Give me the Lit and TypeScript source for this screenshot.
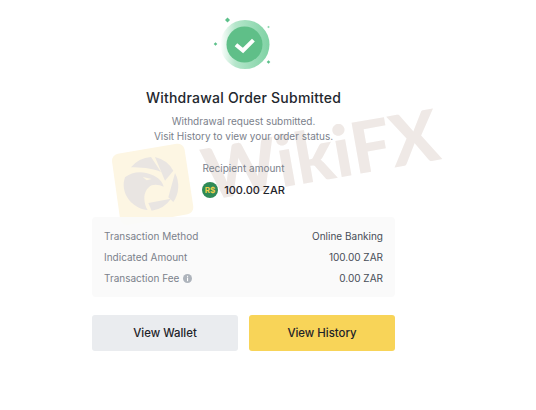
import { LitElement, html, css } from "lit";
import { customElement } from "lit/decorators.js";

@customElement("app-root")
export class AppRoot extends LitElement {
  static styles = css`
    :host { display: block; width: 536px; height: 410px; background: #fff; position: relative; overflow: hidden; font-family: Inter, "Liberation Sans", sans-serif; color: #1e2329; }
    .wm-logo { position: absolute; left: 105px; top: 138px; width: 95px; height: 95px; display: block; }
    .wm-text { position: absolute; left: 203px; top: 130px; font-family: "Lato", sans-serif; font-weight: 900; font-size: 71px; line-height: 88px; color: #efe9e6; transform: rotate(-10deg); transform-origin: left center; white-space: nowrap; }
    .page { position: relative; width: 303px; margin-left: 92px; display: flex; flex-direction: column; align-items: center; padding-top: 15px; }
    .hero { width: 56px; height: 56px; display: block; overflow: visible; }
    h1 { margin: 17px 0 0; font-size: 14px; line-height: 20px; font-weight: 500; letter-spacing: 0.22px; white-space: nowrap; color: #23272d; }
    .sub { margin-top: 6px; font-size: 10px; line-height: 15px; color: #7b818b; text-align: center; letter-spacing: -0.02px; }
    .label { margin-top: 17px; font-size: 10px; line-height: 15px; color: #7b818b; }
    .amount { margin-top: 6px; display: flex; align-items: center; gap: 6px; font-size: 11px; line-height: 16px; font-weight: 500; }
    .coin { width: 16px; height: 16px; display: block; }
    .panel { align-self: stretch; margin-top: 19px; height: 80px; box-sizing: border-box; padding: 9px 12px; background: rgba(250,250,250,0.93); border-radius: 4px; display: flex; flex-direction: column; justify-content: space-between; font-size: 10px; line-height: 21px; }
    .row { display: flex; justify-content: space-between; align-items: center; height: 21px; }
    .row .k { color: #7b818b; display: flex; align-items: center; gap: 4px; }
    .row .v { color: #474d57; }
    .info { width: 9px; height: 9px; display: block; }
    .btns { align-self: stretch; margin-top: 18px; display: grid; grid-template-columns: 1fr 1fr; gap: 11px; }
    .btn { height: 36px; border: 0; border-radius: 3px; font: 500 11.4px Inter, "Liberation Sans", sans-serif; color: #1e2329; padding: 0; }
    .sec { background: #eaecef; }
    .pri { background: #f8d458; }
  `;

  render() {
    return html`
      <svg class="wm-logo" viewBox="0 0 285 285">
        <path d="M42 68 L218 38 L244 208 L66 240 Z" fill="#fdf6e3" stroke="#fdf6e3" stroke-width="42" stroke-linejoin="round"/>
        <g fill="#e9e5e2">
          <path d="M78 88 A84 84 0 0 1 138 57 L168 102 C140 90 105 88 78 88 Z"/>
          <path d="M60 118 C80 100 115 98 140 110 C160 118 172 130 176 146 C165 140 150 138 140 142 C125 150 118 165 118 180 C118 195 122 208 128 216 C90 212 56 180 56 140 C56 132 58 125 60 118 Z"/>
          <path d="M150 57 A84 84 0 0 1 205 98 L180 128 Z"/>
          <path d="M210 105 A84 84 0 0 1 205 192 L190 178 Z"/>
          <path d="M130 195 L198 182 A84 84 0 0 1 140 218 Z"/>
        </g>
        <path d="M113 117 L140 123 L125 127 Z" fill="#fdf6e3"/>
      </svg>
      <div class="wm-text">WikiFX</div>
      <div class="page">
        <svg class="hero" viewBox="0 0 56 56">
          <defs>
            <linearGradient id="ring" x1="0" y1="0.5" x2="1" y2="0.5">
              <stop offset="0" stop-color="#fff"/>
              <stop offset="0.3" stop-color="#b5e6cb"/>
              <stop offset="1" stop-color="#7fd2a4"/>
            </linearGradient>
          </defs>
          <circle cx="29" cy="29.5" r="24.5" fill="url(#ring)"/>
          <circle cx="28.5" cy="29.5" r="18" fill="#5fbf88"/>
          <path d="M21.5 31 L27 35.5 L36 26.5" fill="none" stroke="#fff" stroke-width="4" stroke-linecap="square"/>
          <path d="M11.5 2.5 l2.5 2.5 l-2.5 2.5 l-2.5 -2.5Z" fill="#5cc08a"/>
          <path d="M-0.5 27.2 l1.8 1.8 l-1.8 1.8 l-1.8 -1.8Z" fill="#5cc08a"/>
          <path d="M52.5 10.7 l1.3 1.3 l-1.3 1.3 l-1.3 -1.3Z" fill="#8ed6ae"/>
          <path d="M52.5 45.2 l1.8 1.8 l-1.8 1.8 l-1.8 -1.8Z" fill="#5cc08a"/>
        </svg>
        <h1>Withdrawal Order Submitted</h1>
        <div class="sub">Withdrawal request submitted.<br />Visit History to view your order status.</div>
        <div class="label">Recipient amount</div>
        <div class="amount">
          <svg class="coin" viewBox="0 0 16 16">
            <circle cx="8" cy="8" r="8" fill="#2f8a57"/>
            <text x="8" y="10.8" text-anchor="middle" font-size="8" font-weight="700" fill="#f0d04a" font-family="Inter, sans-serif">R$</text>
          </svg>
          <span>100.00 ZAR</span>
        </div>
        <div class="panel">
          <div class="row"><span class="k">Transaction Method</span><span class="v">Online Banking</span></div>
          <div class="row"><span class="k">Indicated Amount</span><span class="v">100.00 ZAR</span></div>
          <div class="row">
            <span class="k">Transaction Fee
              <svg class="info" viewBox="0 0 9 9">
                <circle cx="4.5" cy="4.5" r="4.5" fill="#aeb4bc"/>
                <rect x="4" y="1.8" width="1.1" height="1.1" fill="#fff"/>
                <rect x="4" y="3.6" width="1.1" height="3.6" fill="#fff"/>
              </svg>
            </span>
            <span class="v">0.00 ZAR</span>
          </div>
        </div>
        <div class="btns">
          <button class="btn sec">View Wallet</button>
          <button class="btn pri">View History</button>
        </div>
      </div>
    `;
  }
}
